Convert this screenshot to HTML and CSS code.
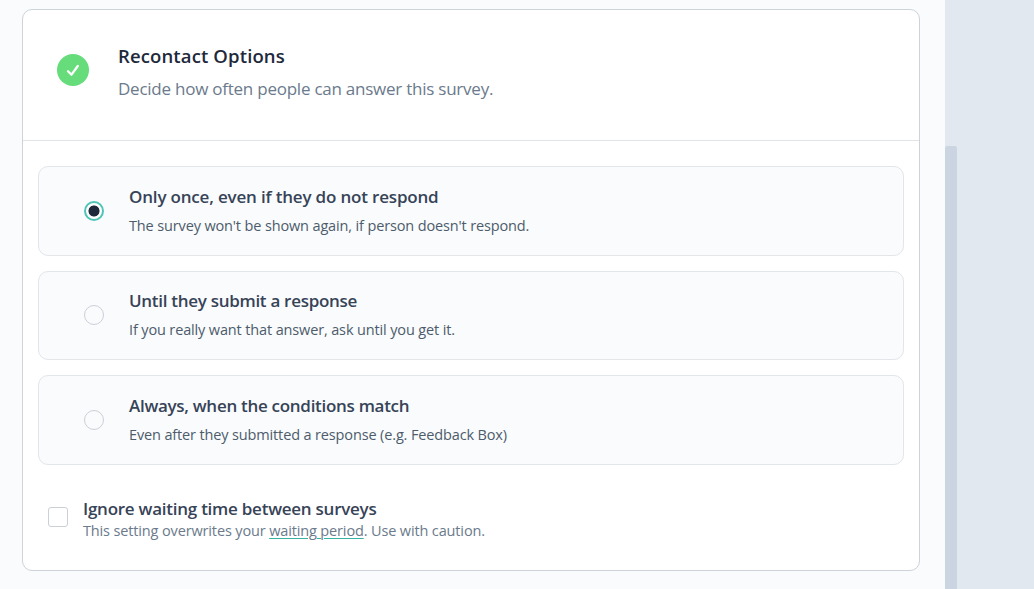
FILE: index.html
```html
<!DOCTYPE html>
<html lang="en">
<head>
<meta charset="utf-8">
<title>Recontact Options</title>
<link rel="stylesheet" href="styles.css">
</head>
<body>
<div class="page">
  <main class="editor">
    <section class="card">
      <header class="card-header">
        <svg class="check" viewBox="0 0 32 32"><circle cx="16" cy="16" r="16" fill="#66dc7b"/><path d="M11 17.2l3.5 3.5 6.3-8.7" fill="none" stroke="#fff" stroke-width="2.3" stroke-linecap="round" stroke-linejoin="round"/></svg>
        <div class="heading">
          <h1 class="title">Recontact Options</h1>
          <p class="subtitle">Decide how often people can answer this survey.</p>
        </div>
      </header>
      <div class="options">
        <label class="option">
          <span class="radio radio-on"></span>
          <span class="copy"><span class="label label-once">Only once, even if they do not respond</span><span class="hint">The survey won't be shown again, if person doesn't respond.</span></span>
        </label>
        <label class="option">
          <span class="radio"></span>
          <span class="copy"><span class="label">Until they submit a response</span><span class="hint">If you really want that answer, ask until you get it.</span></span>
        </label>
        <label class="option">
          <span class="radio"></span>
          <span class="copy"><span class="label">Always, when the conditions match</span><span class="hint">Even after they submitted a response (e.g. Feedback Box)</span></span>
        </label>
      </div>
      <label class="ignore">
        <span class="checkbox"></span>
        <span class="ignore-copy"><span class="label label-ignore">Ignore waiting time between surveys</span><span class="note">This setting overwrites your <a class="link">waiting period</a>. Use with caution.</span></span>
      </label>
    </section>
  </main>
  <div class="scrollbar"><div class="thumb"></div></div>
  <aside class="preview"></aside>
</div>
</body>
</html>
```
FILE: styles.css
```css
* { box-sizing: border-box; }
body { margin: 0; font-family: "Open Sans", "Noto Sans", sans-serif; }
.page { display: flex; height: 589px; overflow: hidden; background: #e2e8f0; }
.editor { width: 945px; padding: 9px 25px 0 22px; background: #f9fbfd; }
.card { height: 562px; border: 1px solid #cdd3d9; border-radius: 10px; background: #fff; }
.card-header { display: flex; height: 131px; padding: 33px 0 0 34px; border-bottom: 1px solid #e0e4e7; }
.check { width: 32px; height: 32px; margin-top: 11px; }
.heading { margin-left: 29px; }
.title, .subtitle { margin: 0; line-height: 25px; white-space: nowrap; }
.title { color: #1e293b; font-size: 18.5px; font-weight: 600; letter-spacing: 0.13px; }
.subtitle { margin-top: 8px; color: #6b7a8c; font-size: 17px; font-weight: 400; letter-spacing: -0.24px; }
.options { display: grid; gap: 15px; padding: 25px 15px 0; }
.option { display: flex; align-items: center; height: 89.5px; padding-left: 45px; border: 1px solid #e2e6e9; border-radius: 10px; background: #f9fbfd; }
.radio { width: 20px; height: 20px; border: 1px solid #cbd0d7; border-radius: 50%; }
.radio-on { border: 2px solid #4fc5b7; background: radial-gradient(circle, #1e293b 5.1px, #fff 5.9px); }
.copy { display: flex; flex-direction: column; margin-left: 25px; white-space: nowrap; }
.label { color: #374357; font-size: 17px; font-weight: 600; line-height: 24px; letter-spacing: -0.29px; }
.label-once { letter-spacing: -0.18px; }
.label-ignore { letter-spacing: -0.25px; }
.hint { margin-top: 6px; color: #4d5b6b; font-size: 14.5px; line-height: 22px; letter-spacing: -0.14px; }
.ignore { display: flex; margin: 31px 0 0 25px; }
.checkbox { width: 20px; height: 20px; margin-top: 11px; border: 1px solid #cbd0d7; border-radius: 3px; background: #fff; }
.ignore-copy { display: flex; flex-direction: column; margin-left: 15px; padding-top: 1px; white-space: nowrap; }
.note { margin-top: -1px; color: #6b7a8c; font-size: 14.5px; line-height: 22px; letter-spacing: -0.14px; }
.link { text-decoration: underline 1px #38b2a5; text-underline-offset: 2px; }
.scrollbar { width: 12px; padding-top: 146px; background: #e2e8f0; }
.thumb { height: 443px; border-radius: 2px 2px 0 0; background: #cbd5e1; }
.preview { flex: 1; background: #e2e8f0; }
```
